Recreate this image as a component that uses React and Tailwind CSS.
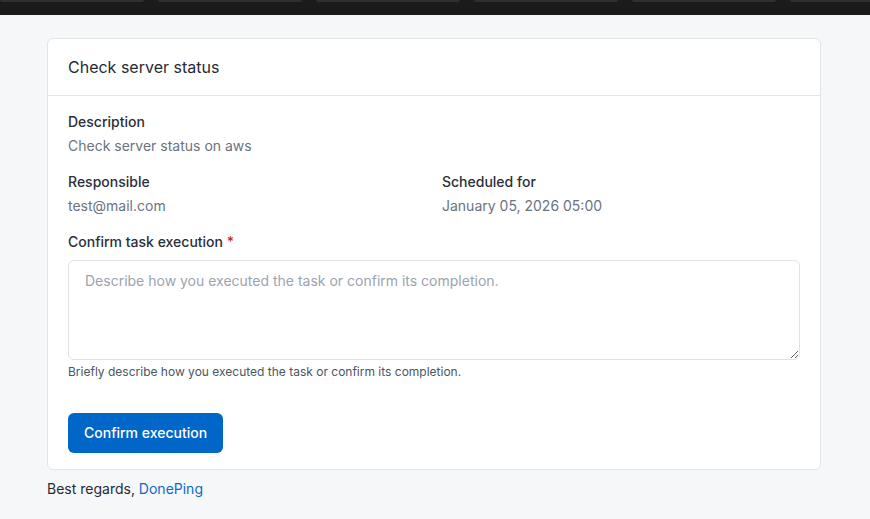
import React from 'react';

const TopBar = () => {
  return (
    <div className="flex h-[15px] gap-[14px] overflow-hidden bg-[#1b1b1b]">
      {[0, 1, 2, 3, 4, 5].map((i) => (
        <div key={i} className="h-[2px] w-[144px] shrink-0 rounded-b-[3px] bg-[#2f2f2f]" />
      ))}
    </div>
  );
};

const Field = ({ label, value }) => (
  <div>
    <div className="text-sm font-medium leading-5 text-[#2a303a]">{label}</div>
    <div className="mt-1 text-sm leading-5 text-[#6b7280]">{value}</div>
  </div>
);

const App = () => {
  return (
    <div className="min-h-screen bg-[#f6f7f9] font-['Inter',sans-serif]">
      <TopBar />
      <div className="ml-[47px] mt-[23px] w-[774px] rounded-md border border-[#e2e5ea] bg-white">
        <div className="flex h-[57px] items-center border-b border-[#e2e5ea] px-5">
          <h2 className="text-base leading-6 text-[#252b35]">Check server status</h2>
        </div>
        <div className="px-5 pb-4 pt-4">
          <Field label="Description" value="Check server status on aws" />
          <div className="mt-4 grid grid-cols-2 gap-4">
            <Field label="Responsible" value="test@mail.com" />
            <Field label="Scheduled for" value="January 05, 2026 05:00" />
          </div>
          <div className="mt-4">
            <label className="block text-sm font-medium leading-5 text-[#2a303a]">
              Confirm task execution <span className="text-[#dc2626]">*</span>
            </label>
            <textarea
              className="mt-2 block h-[100px] w-full rounded-md border border-[#dfe2e7] px-4 py-2.5 text-sm leading-5 text-[#252b35] outline-none placeholder:text-[#9ca3af]"
              placeholder="Describe how you executed the task or confirm its completion."
            />
            <p className="mt-1 text-xs leading-4 text-[#4b5563]">
              Briefly describe how you executed the task or confirm its completion.
            </p>
          </div>
          <button className="mt-[33px] h-10 rounded-md bg-[#0066c8] px-4 text-sm font-medium text-white">
            Confirm execution
          </button>
        </div>
      </div>
      <p className="ml-[47px] mt-[9px] text-sm leading-5 text-[#252b35]">
        Best regards, <a className="text-[#0b6bcb]">DonePing</a>
      </p>
    </div>
  );
};

export default App;
